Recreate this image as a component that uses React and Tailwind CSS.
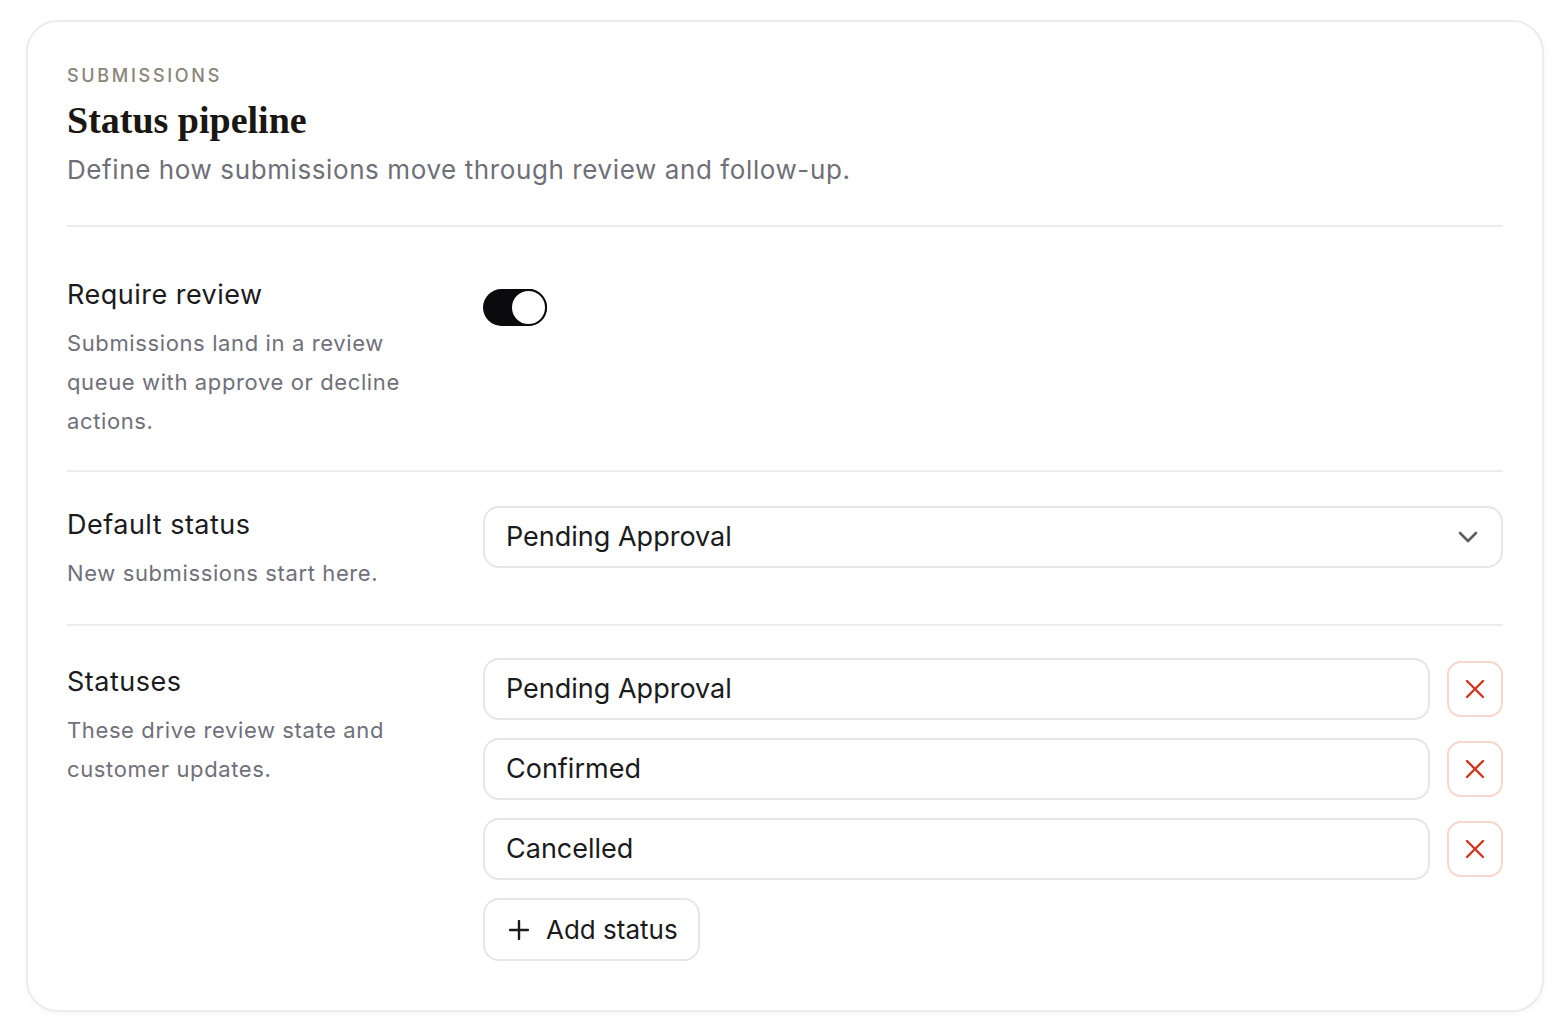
import { useState } from "react";

const sans = "font-['Inter','Noto_Sans',sans-serif]";

function XIcon() {
  return (
    <svg width="22" height="22" viewBox="0 0 22 22" fill="none">
      <path d="M3 3l16 16M19 3L3 19" stroke="#d0361c" strokeWidth="2.4" strokeLinecap="round" />
    </svg>
  );
}

function Row({ title, desc, children, className = "" }) {
  return (
    <div className={`grid grid-cols-[376px_1fr] gap-x-10 border-t-2 border-[#ececec] ${className}`}>
      <div>
        <h3 className="text-[27px] leading-[38px] tracking-[0.018em] text-[#1b1b1d]">{title}</h3>
        <p className="mt-[10px] text-[22px] leading-[39px] tracking-[0.028em] text-[#70707a]">{desc}</p>
      </div>
      <div>{children}</div>
    </div>
  );
}

export default function App() {
  const [review, setReview] = useState(true);
  const [statuses, setStatuses] = useState(["Pending Approval", "Confirmed", "Cancelled"]);

  return (
    <div className={`min-h-screen bg-white pt-[20px] pr-[24px] pb-[25px] pl-[26px] ${sans}`}>
      <section className="rounded-[32px] border-2 border-[#ececec] bg-white px-[39px] pt-[40px] pb-[49px] shadow-[0_2px_6px_rgba(0,0,0,0.04)]">
        {/* Header */}
        <div className="pb-[37px]">
          <p className="text-[18px] leading-[28px] font-medium tracking-[0.15em] text-[#8b8479]">SUBMISSIONS</p>
          <h2 className="mt-[9px] font-['Liberation_Serif','Times_New_Roman',serif] text-[38px] leading-[42px] font-bold text-[#1a1713]">
            Status pipeline
          </h2>
          <p className="mt-[11px] text-[26px] leading-[36px] tracking-[0.023em] text-[#6f6f78]">
            Define how submissions move through review and follow-up.
          </p>
        </div>

        <Row
          title="Require review"
          desc="Submissions land in a review queue with approve or decline actions."
          className="pt-[49px] pb-[29px]"
        >
          <button
            type="button"
            onClick={() => setReview(!review)}
            className={`mt-[13px] flex h-[37px] w-[64px] items-center rounded-full p-0 ${review ? "justify-end bg-[#0b0b0d]" : "justify-start bg-[#d4d4d8]"}`}
          >
            <span className="h-[37px] w-[37px] rounded-full border-[2px] border-[#0b0b0d] bg-white" />
          </button>
        </Row>

        <Row title="Default status" desc="New submissions start here." className="pt-[34px] pb-[31px]">
          <div className="flex h-[62px] items-center justify-between rounded-[16px] border-2 border-[#e6e6e6] pl-[21px] pr-[23px]">
            <span className="text-[27px] text-[#1b1b1d]">Pending Approval</span>
            <svg width="20" height="12" viewBox="0 0 20 12" fill="none">
              <path d="M2 2l8 8 8-8" stroke="#5e5e66" strokeWidth="2.6" strokeLinecap="round" strokeLinejoin="round" />
            </svg>
          </div>
        </Row>

        <Row
          title={<span className="block pt-[5px]">Statuses</span>}
          desc="These drive review state and customer updates."
          className="pt-[32px]"
        >
          <div className="flex flex-col gap-[18px]">
            {statuses.map((s, i) => (
              <div key={i} className="flex items-center gap-[17px]">
                <div className="flex h-[62px] flex-1 items-center rounded-[16px] border-2 border-[#e6e6e6] pl-[21px] text-[27px] text-[#1b1b1d]">
                  {s}
                </div>
                <button
                  type="button"
                  onClick={() => setStatuses(statuses.filter((_, j) => j !== i))}
                  className="flex h-[56px] w-[56px] items-center justify-center rounded-[14px] border-2 border-[#f7d6ce] bg-white"
                >
                  <XIcon />
                </button>
              </div>
            ))}
            <div>
              <button
                type="button"
                onClick={() => setStatuses([...statuses, "New status"])}
                className="flex h-[63px] items-center gap-[17px] rounded-[16px] border-2 border-[#e6e6e6] bg-white pl-[24px] pr-[20px] text-[26px] text-[#1b1b1d]"
              >
                <svg width="20" height="20" viewBox="0 0 20 20" fill="none">
                  <path d="M10 1v18M1 10h18" stroke="#1b1b1d" strokeWidth="2.4" strokeLinecap="round" />
                </svg>
                Add status
              </button>
            </div>
          </div>
        </Row>
      </section>
    </div>
  );
}
